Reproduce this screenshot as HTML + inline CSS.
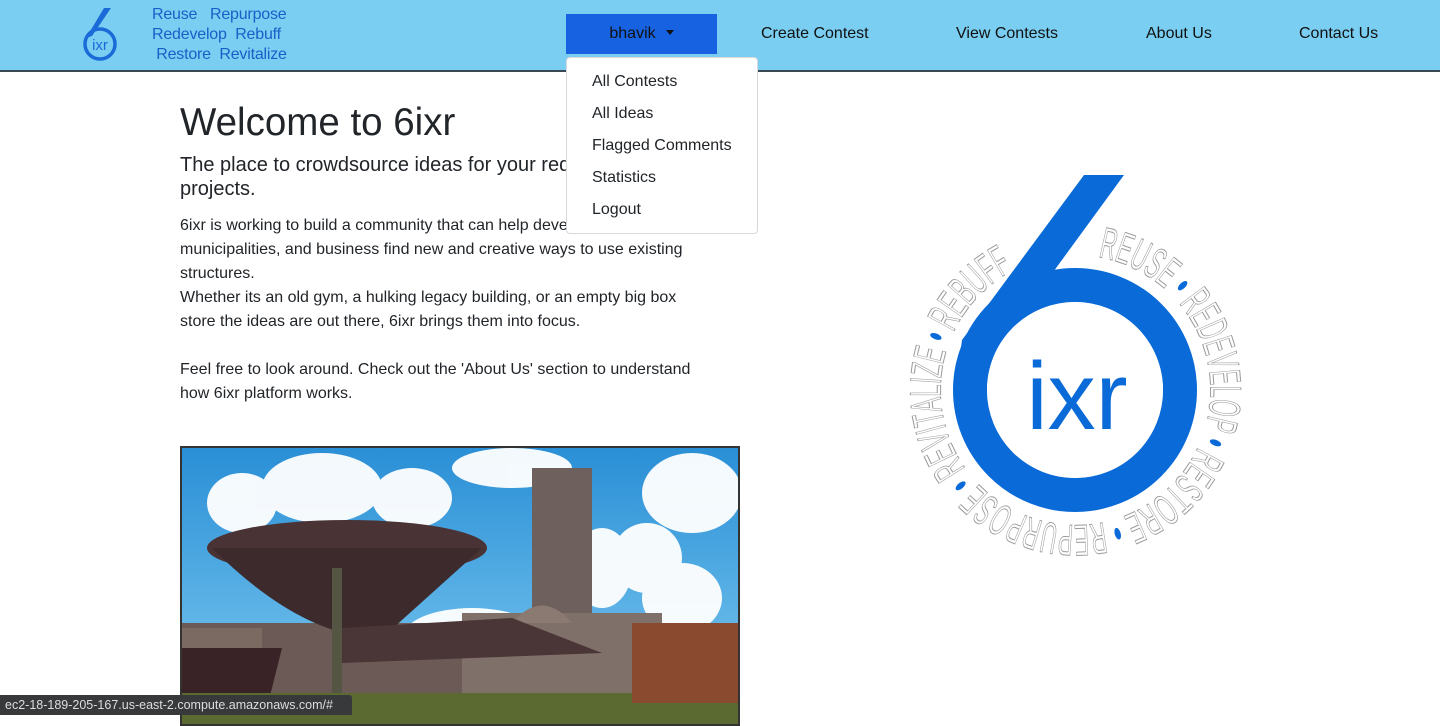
<!DOCTYPE html>
<html><head><meta charset="utf-8"><style>
*{box-sizing:border-box;margin:0;padding:0}
body{width:1440px;height:715px;overflow:hidden;background:#fff;font-family:"Liberation Sans",Arial,sans-serif;color:#212529;position:relative}
.nav{position:absolute;left:0;top:0;width:1440px;height:72px;background:#79cef1;border-bottom:2px solid #3a4a55}
.tag{position:absolute;left:152px;top:5px;color:#1a5fc8;font-size:16px;line-height:20px;letter-spacing:-.2px}
.navl{position:absolute;top:25px;font-size:16px;color:#111}
.btn{position:absolute;left:566px;top:14px;width:151px;height:40px;background:#1762e1;color:#111;font-size:16px;text-align:center;line-height:40px}
.caret{display:inline-block;border-left:4.5px solid transparent;border-right:4.5px solid transparent;border-top:5px solid #111;vertical-align:middle;margin-left:10px;margin-top:-3px}
.dd{position:absolute;left:566px;top:57px;width:192px;height:177px;background:#fff;border:1px solid rgba(0,0,0,.15);border-radius:4px;padding-top:10px;z-index:5}
.dd div{padding-left:25px;height:32px;line-height:28px;font-size:16px;color:#212529}
h1{position:absolute;left:180px;top:99px;font-size:38.5px;font-weight:400;line-height:48px}
.lead{position:absolute;left:180px;top:153px;width:560px;font-size:20px;line-height:24px}
.body{position:absolute;left:180px;top:214px;width:525px;font-size:16px;line-height:24px}
.photo{position:absolute;left:180px;top:446px;width:560px;height:280px;border:2px solid #333;overflow:hidden;background:linear-gradient(#2a8fd6,#5db3e6 60%,#8cc6e6)}
.status{position:absolute;left:0;top:695px;width:352px;height:20px;background:#38393b;color:#ddd;font-size:12.5px;line-height:20px;padding-left:5px;border-top-right-radius:3px;z-index:6}
</style></head><body>
<div class="nav">
<svg style="position:absolute;left:80px;top:6px" width="42" height="56" viewBox="0 0 42 56">
<path d="M24 2 L31 2 L12 30 L6 32 Z" fill="#1a6ad8"/>
<circle cx="20" cy="38" r="15" fill="none" stroke="#1a6ad8" stroke-width="3.5"/>
<text x="20" y="44" font-size="15" fill="#1a6ad8" text-anchor="middle" font-family="Liberation Sans">ixr</text>
</svg>
<div class="tag">Reuse&nbsp;&nbsp; Repurpose<br>Redevelop&nbsp; Rebuff<br>&nbsp;Restore&nbsp; Revitalize</div>
<div class="btn">bhavik<span class="caret"></span></div>
<div class="navl" style="left:761px">Create Contest</div>
<div class="navl" style="left:956px">View Contests</div>
<div class="navl" style="left:1146px">About Us</div>
<div class="navl" style="left:1299px">Contact Us</div>
</div>
<div class="dd"><div>All Contests</div><div>All Ideas</div><div>Flagged Comments</div><div>Statistics</div><div>Logout</div></div>
<h1>Welcome to 6ixr</h1>
<div class="lead">The place to crowdsource ideas for your redevelopment projects.</div>
<div class="body">6ixr is working to build a community that can help developers, municipalities, and business find new and creative ways to use existing structures.<br>Whether its an old gym, a hulking legacy building, or an empty big box store the ideas are out there, 6ixr brings them into focus.<br><br>Feel free to look around. Check out the 'About Us' section to understand how 6ixr platform works.</div>
<div class="photo">
<svg width="560" height="280" viewBox="0 0 560 280">
<g fill="#fff" opacity=".95">
<ellipse cx="60" cy="55" rx="35" ry="30"/><ellipse cx="140" cy="40" rx="60" ry="35"/><ellipse cx="230" cy="50" rx="40" ry="30"/>
<ellipse cx="330" cy="20" rx="60" ry="20"/><ellipse cx="510" cy="45" rx="50" ry="40"/><ellipse cx="420" cy="120" rx="30" ry="40"/>
<ellipse cx="465" cy="110" rx="35" ry="35"/><ellipse cx="500" cy="150" rx="40" ry="35"/><ellipse cx="290" cy="190" rx="70" ry="30"/>
</g>
<rect x="0" y="175" width="560" height="110" fill="#6b5a55"/>
<rect x="0" y="180" width="80" height="60" fill="#7a6a62"/>
<rect x="350" y="20" width="60" height="170" fill="#6e605c"/>
<rect x="280" y="165" width="200" height="100" fill="#80706a"/>
<path d="M330 175 Q360 140 390 175 Z" fill="#8a7a72"/>
<path d="M0 200 L100 200 L80 280 L0 280 Z" fill="#3a2326"/>
<ellipse cx="165" cy="100" rx="140" ry="28" fill="#4a3335"/>
<path d="M30 100 Q120 190 200 190 L300 100 Z" fill="#3d2a2c"/>
<rect x="150" y="120" width="10" height="150" fill="#554"/>
<path d="M160 180 L330 170 L420 205 L160 215 Z" fill="#4a3537"/>
<rect x="0" y="245" width="560" height="40" fill="#5a6a30"/>
<rect x="450" y="175" width="110" height="80" fill="#8a4a30"/>
</svg>
</div>
<svg style="position:absolute;left:880px;top:160px" width="380" height="400" viewBox="880 160 380 400">
<defs><path id="ring" d="M1098 257 A135 135 0 1 1 1018 268"/></defs>
<text font-family="Liberation Sans Narrow, Liberation Sans, sans-serif" font-size="44" fill="none" stroke="#9a9a9a" stroke-width="1"><textPath href="#ring" textLength="760" lengthAdjust="spacingAndGlyphs">REUSE <tspan fill="#0a6ad8" stroke="none">•</tspan> REDEVELOP <tspan fill="#0a6ad8" stroke="none">•</tspan> RESTORE <tspan fill="#0a6ad8" stroke="none">•</tspan> REPURPOSE <tspan fill="#0a6ad8" stroke="none">•</tspan> REVITALIZE <tspan fill="#0a6ad8" stroke="none">•</tspan> REBUFF</textPath></text>
<path d="M1084 175 L1124 175 L1040 290 L956 385 L962 340 Z" fill="#0a6ad8"/>
<circle cx="1075" cy="390" r="105" fill="none" stroke="#0a6ad8" stroke-width="34"/>
<circle cx="1075" cy="390" r="88" fill="#fff"/>
<text x="1077" y="429" text-anchor="middle" font-family="Liberation Sans" font-size="96" fill="#0a6ad8">ixr</text>
</svg>
<div class="status">ec2-18-189-205-167.us-east-2.compute.amazonaws.com/#</div>
</body></html>
